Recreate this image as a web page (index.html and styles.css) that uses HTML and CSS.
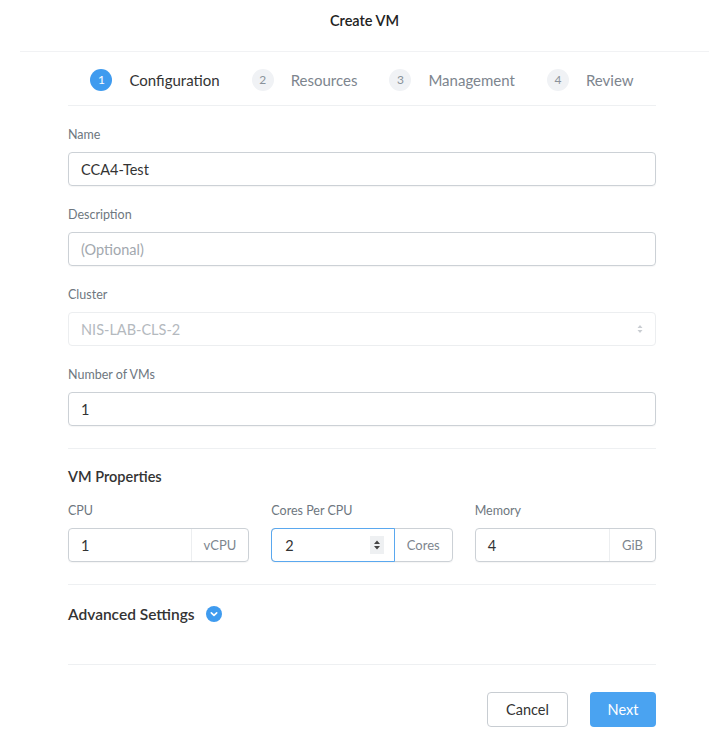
FILE: index.html
```html
<!DOCTYPE html>
<html>
<head>
<meta charset="utf-8">
<link rel="stylesheet" href="styles.css">
</head>
<body>
<div class="modal">
  <div class="header">Create VM</div>
  <div class="content">
    <div class="steps">
      <div class="step active"><span class="num">1</span><span class="label">Configuration</span></div>
      <div class="step"><span class="num">2</span><span class="label">Resources</span></div>
      <div class="step"><span class="num">3</span><span class="label">Management</span></div>
      <div class="step"><span class="num">4</span><span class="label">Review</span></div>
    </div>

    <div class="form">
      <div class="field">
        <div class="flabel">Name</div>
        <div class="input"><span class="value">CCA4-Test</span></div>
      </div>
      <div class="field">
        <div class="flabel">Description</div>
        <div class="input"><span class="placeholder">(Optional)</span></div>
      </div>
      <div class="field">
        <div class="flabel">Cluster</div>
        <div class="input disabled"><span class="dvalue">NIS-LAB-CLS-2</span>
          <svg class="sel-arrows" width="6" height="10" viewBox="0 0 6 10"><path d="M3 1 L5.5 4 H0.5 Z M3 9 L5.5 6 H0.5 Z" fill="#c9cdd2"/></svg>
        </div>
      </div>
      <div class="field last">
        <div class="flabel">Number of VMs</div>
        <div class="input"><span class="value">1</span></div>
      </div>
    </div>

    <div class="section">
      <div class="section-title">VM Properties</div>
      <div class="props">
        <div class="prop">
          <div class="flabel">CPU</div>
          <div class="group">
            <div class="gin"><span class="value">1</span></div>
            <div class="addon">vCPU</div>
          </div>
        </div>
        <div class="prop">
          <div class="flabel">Cores Per CPU</div>
          <div class="group">
            <div class="gin focus"><span class="value">2</span>
              <span class="spin"><svg width="8" height="12" viewBox="0 0 8 12"><path d="M4 1.5 L7 5 H1 Z M4 10.5 L7 7 H1 Z" fill="#444"/></svg></span>
            </div>
            <div class="addon">Cores</div>
          </div>
        </div>
        <div class="prop">
          <div class="flabel">Memory</div>
          <div class="group">
            <div class="gin"><span class="value">4</span></div>
            <div class="addon">GiB</div>
          </div>
        </div>
      </div>
    </div>

    <div class="advanced">
      <span class="adv-title">Advanced Settings</span>
      <span class="adv-icon"><svg width="16" height="16" viewBox="0 0 16 16"><circle cx="8" cy="8" r="8" fill="#3f9bef"/><path d="M5.3 6.8 L8 9.4 L10.7 6.8" fill="none" stroke="#fff" stroke-width="1.6" stroke-linecap="round" stroke-linejoin="round"/></svg></span>
    </div>

    <div class="footer">
      <div class="btn cancel">Cancel</div>
      <div class="btn next">Next</div>
    </div>
  </div>
</div>
</body>
</html>
```

FILE: styles.css
```css
* { box-sizing: border-box; }
html, body { margin: 0; padding: 0; background: #fff; }
body {
  font-family: Lato, "Open Sans", "Liberation Sans", sans-serif;
  color: #333;
  -webkit-font-smoothing: antialiased;
}
.modal {
  margin-left: 20px;
  width: 689px;
}
.header {
  height: 52px;
  padding-top: 11px;
  text-align: center;
  font-size: 14.5px;
  font-weight: 600;
  color: #222;
  line-height: 20px;
  border-bottom: 1px solid #f1f2f4;
}
.content {
  padding: 0 53px 0 48px;
}
.steps {
  display: flex;
  justify-content: center;
  align-items: center;
  gap: 32px;
  height: 54px;
  border-bottom: 1px solid #eef0f2;
  padding-top: 2px;
}
.step {
  display: flex;
  align-items: center;
}
.num {
  width: 22px;
  height: 22px;
  border-radius: 50%;
  background: #f0f2f5;
  color: #8a929b;
  font-size: 12px;
  display: flex;
  align-items: center;
  justify-content: center;
}
.step .label {
  margin-left: 17px;
  font-size: 15px;
  color: #7d858e;
}
.step.active .num {
  background: #3f9bef;
  color: #fff;
}
.step.active .label { color: #333; }

.form { padding-top: 21px; border-bottom: 1px solid #eef0f2; }
.field { margin-bottom: 21px; }
.field.last { margin-bottom: 22px; }
.flabel {
  font-size: 12.5px;
  color: #6e7780;
  line-height: 16px;
  margin-bottom: 9px;
}
.input {
  height: 34px;
  border: 1px solid #ccd1d6;
  border-radius: 4px;
  display: flex;
  align-items: center;
  justify-content: space-between;
  padding: 0 12px;
  font-size: 14.5px;
  box-shadow: 0 1px 1px rgba(0,0,0,0.04);
}
.value { color: #333; }
.placeholder { color: #a2a8ae; }
.input.disabled { border-color: #eceef0; box-shadow: none; }
.dvalue { color: #b4b9be; }

.section { padding-top: 18px; border-bottom: 1px solid #eef0f2; padding-bottom: 22px; }
.section-title { font-size: 14.5px; font-weight: 600; color: #333; line-height: 20px; margin-bottom: 16px; }
.props { display: grid; grid-template-columns: repeat(3, 1fr); gap: 22px; }
.group {
  display: flex;
  height: 34px;
  border: 1px solid #ccd1d6;
  border-radius: 4px;
  box-shadow: 0 1px 1px rgba(0,0,0,0.04);
}
.gin {
  flex: 1;
  display: flex;
  align-items: center;
  justify-content: space-between;
  padding: 0 12px;
  font-size: 14.5px;
  border-radius: 4px 0 0 4px;
}
.gin.focus {
  margin: -1px 0 -1px -1px;
  border: 1px solid #5aa8ef;
  padding: 0 12px 0 13px;
}
.spin {
  width: 14px;
  height: 18px;
  background: #eef0f2;
  display: flex;
  align-items: center;
  justify-content: center;
  margin-right: -2px;
}
.addon {
  display: flex;
  align-items: center;
  padding: 0 12px;
  font-size: 13px;
  color: #7d858e;
  border-left: 1px solid #eceef0;
}
.gin.focus + .addon { border-left: none; }

.advanced {
  height: 80px;
  display: flex;
  align-items: center;
  padding-bottom: 21px;
  border-bottom: 1px solid #eef0f2;
}
.adv-title { font-size: 15.5px; font-weight: 600; color: #333; }
.adv-icon { margin-left: 11px; display: flex; }

.footer {
  display: flex;
  justify-content: flex-end;
  gap: 22px;
  padding-top: 27px;
}
.btn {
  height: 35px;
  border-radius: 4px;
  display: flex;
  align-items: center;
  justify-content: center;
  font-size: 14.5px;
}
.cancel {
  width: 81px;
  border: 1px solid #c8cdd2;
  color: #333;
  background: #fff;
}
.next {
  width: 66px;
  background: #4aa3f1;
  color: #fff;
}
```
